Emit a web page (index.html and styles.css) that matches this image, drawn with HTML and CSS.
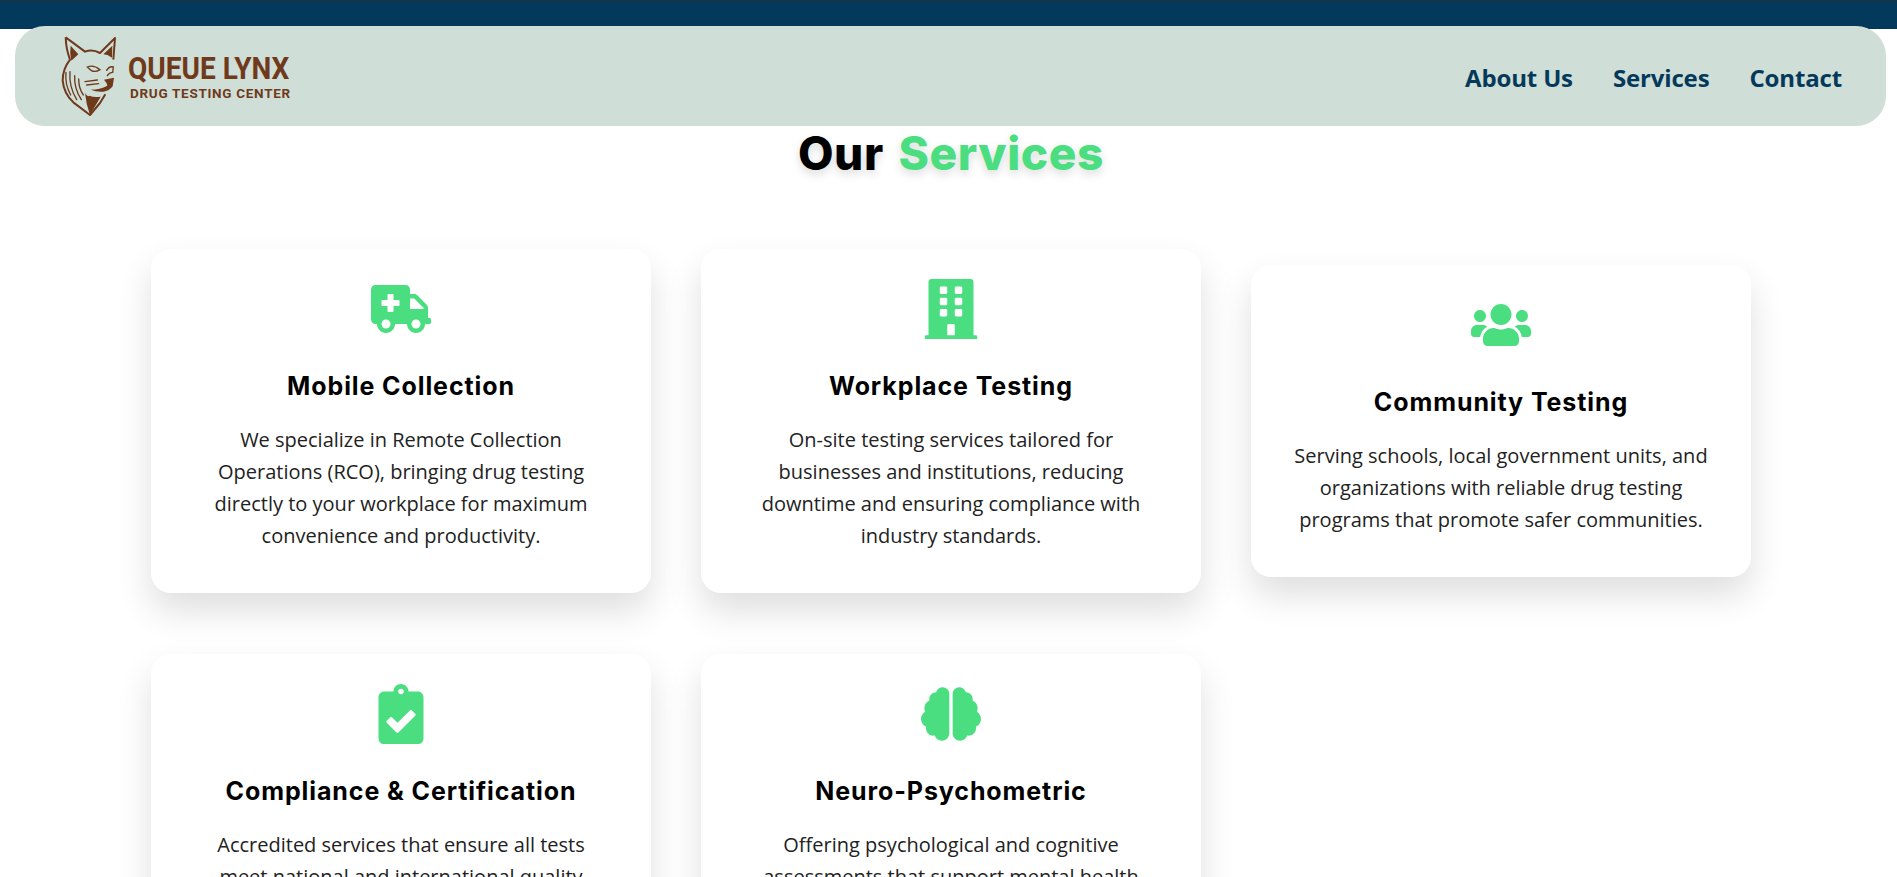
FILE: index.html
```html
<!DOCTYPE html>
<html lang="en">
<head>
<meta charset="utf-8">
<title>Queue Lynx Drug Testing Center</title>
<link rel="stylesheet" href="styles.css">
</head>
<body>
<div class="topbar"></div>
<header class="nav">
  <a class="brand" href="#">
    <svg class="lynx" viewBox="0 0 210 270" aria-hidden="true">
      <path class="lynx-line" d="M47 25 L105 68 Q128 60 150 72 L195 27 L190 92 M47 25 Q48 60 60 92 Q38 120 38 155 Q42 195 70 220 L120 258 L150 222 L166 196"/>
      <path class="lynx-fill" d="M62 50 L85 76 L64 95 Q58 72 62 50Z"/>
      <path class="lynx-fill" d="M160 76 L187 50 L186 86 Q172 76 160 76Z"/>
      <path class="lynx-thin" d="M48 130 Q44 165 62 198 M60 128 Q56 172 80 212 M74 140 Q72 178 94 212 M86 150 Q86 178 100 198"/>
      <path class="lynx-fill" d="M105 192 Q112 205 118 200 Q132 206 152 203 L120 258 Q108 225 105 192Z"/>
      <path class="lynx-thin" d="M112 114 Q130 106 150 122 Q138 130 126 126 Q118 120 112 114Z"/>
      <path class="lynx-thin" d="M170 124 Q178 110 190 114 L188 130 Q178 130 172 140"/>
      <path class="lynx-fill" d="M162 152 L192 146 L188 172 Q178 186 160 188 Q140 190 122 182 Q150 182 172 170 Q170 160 162 152Z"/>
      <path class="lynx-thin" d="M105 158 L142 153 M110 168 L146 164"/>
    </svg>
    <span class="wordmark">
      <span class="wordmark-name">QUEUE LYNX</span>
      <span class="wordmark-sub">DRUG TESTING CENTER</span>
    </span>
  </a>
  <nav class="nav-links">
    <a href="#">About Us</a>
    <a href="#">Services</a>
    <a href="#">Contact</a>
  </nav>
</header>
<main class="services">
  <h2 class="services-title">Our <span class="accent">Services</span></h2>
  <div class="grid">
    <article class="card">
      <svg class="icon" viewBox="0 0 640 512" aria-hidden="true"><path d="M624 352h-16V243.9c0-12.7-5.1-24.9-14.1-33.9L494 110.1c-9-9-21.2-14.1-33.9-14.1H416V48c0-26.5-21.5-48-48-48H48C21.5 0 0 21.5 0 48v320c0 26.5 21.5 48 48 48h16c0 53 43 96 96 96s96-43 96-96h128c0 53 43 96 96 96s96-43 96-96h48c8.8 0 16-7.2 16-16v-32c0-8.8-7.2-16-16-16zM160 464c-26.5 0-48-21.5-48-48s21.5-48 48-48 48 21.5 48 48-21.5 48-48 48zm144-248c0 4.4-3.6 8-8 8h-56v56c0 4.4-3.6 8-8 8h-48c-4.4 0-8-3.6-8-8v-56h-56c-4.4 0-8-3.6-8-8v-48c0-4.4 3.6-8 8-8h56v-56c0-4.4 3.6-8 8-8h48c4.4 0 8 3.6 8 8v56h56c4.4 0 8 3.6 8 8v48zm176 248c-26.5 0-48-21.5-48-48s21.5-48 48-48 48 21.5 48 48-21.5 48-48 48zm80-208H416V144h44.1l99.9 99.9V256z"/></svg>
      <h3>Mobile Collection</h3>
      <p>We specialize in Remote Collection Operations (RCO), bringing drug testing directly to your workplace for maximum convenience and productivity.</p>
    </article>
    <article class="card">
      <svg class="icon" viewBox="0 0 448 512" aria-hidden="true"><path d="M436 480h-20V24c0-13.255-10.745-24-24-24H56C42.745 0 32 10.745 32 24v456H12c-6.627 0-12 5.373-12 12v20h448v-20c0-6.627-5.373-12-12-12zM128 76c0-6.627 5.373-12 12-12h40c6.627 0 12 5.373 12 12v40c0 6.627-5.373 12-12 12h-40c-6.627 0-12-5.373-12-12V76zm0 96c0-6.627 5.373-12 12-12h40c6.627 0 12 5.373 12 12v40c0 6.627-5.373 12-12 12h-40c-6.627 0-12-5.373-12-12v-40zm52 148h-40c-6.627 0-12-5.373-12-12v-40c0-6.627 5.373-12 12-12h40c6.627 0 12 5.373 12 12v40c0 6.627-5.373 12-12 12zm76 160h-64v-84c0-6.627 5.373-12 12-12h40c6.627 0 12 5.373 12 12v84zm64-172c0 6.627-5.373 12-12 12h-40c-6.627 0-12-5.373-12-12v-40c0-6.627 5.373-12 12-12h40c6.627 0 12 5.373 12 12v40zm0-96c0 6.627-5.373 12-12 12h-40c-6.627 0-12-5.373-12-12v-40c0-6.627 5.373-12 12-12h40c6.627 0 12 5.373 12 12v40zm0-96c0 6.627-5.373 12-12 12h-40c-6.627 0-12-5.373-12-12V76c0-6.627 5.373-12 12-12h40c6.627 0 12 5.373 12 12v40z"/></svg>
      <h3>Workplace Testing</h3>
      <p>On-site testing services tailored for businesses and institutions, reducing downtime and ensuring compliance with industry standards.</p>
    </article>
    <article class="card">
      <svg class="icon" viewBox="0 0 640 512" aria-hidden="true"><path d="M96 224c35.3 0 64-28.7 64-64s-28.7-64-64-64-64 28.7-64 64 28.7 64 64 64zm448 0c35.3 0 64-28.7 64-64s-28.7-64-64-64-64 28.7-64 64 28.7 64 64 64zm32 32h-64c-17.6 0-33.5 7.1-45.1 18.6 40.3 22.1 68.9 62 75.1 109.4h66c17.7 0 32-14.3 32-32v-32c0-35.3-28.7-64-64-64zm-256 0c61.9 0 112-50.1 112-112S381.9 32 320 32 208 82.1 208 144s50.1 112 112 112zm76.8 32h-8.3c-20.8 10-43.9 16-68.5 16s-47.6-6-68.5-16h-8.3C179.6 288 128 339.6 128 403.2V432c0 26.5 21.5 48 48 48h288c26.5 0 48-21.5 48-48v-28.8c0-63.6-51.6-115.2-115.2-115.2zm-223.7-13.4C161.5 263.1 145.6 256 128 256H64c-35.3 0-64 28.7-64 64v32c0 17.7 14.3 32 32 32h65.9c6.3-47.4 34.9-87.3 75.2-109.4z"/></svg>
      <h3>Community Testing</h3>
      <p>Serving schools, local government units, and organizations with reliable drug testing programs that promote safer communities.</p>
    </article>
    <article class="card">
      <svg class="icon" viewBox="0 0 384 512" aria-hidden="true"><path d="M336 64h-80c0-35.3-28.7-64-64-64s-64 28.7-64 64H48C21.5 64 0 85.5 0 112v352c0 26.5 21.5 48 48 48h288c26.5 0 48-21.5 48-48V112c0-26.5-21.5-48-48-48zM192 40c13.3 0 24 10.7 24 24s-10.7 24-24 24-24-10.7-24-24 10.7-24 24-24zm121.2 231.8l-143 141.8c-4.7 4.7-12.3 4.6-17-.1l-82.6-83.3c-4.7-4.7-4.6-12.3.1-17L99.1 285c4.7-4.7 12.3-4.6 17 .1l46 46.4 106-105.2c4.7-4.7 12.3-4.6 17 .1l28.2 28.4c4.7 4.8 4.6 12.3-.1 17z"/></svg>
      <h3>Compliance &amp; Certification</h3>
      <p>Accredited services that ensure all tests meet national and international quality</p>
    </article>
    <article class="card">
      <svg class="icon" viewBox="0 0 576 512" aria-hidden="true"><path d="M208 0c-29.9 0-54.7 20.5-61.8 48.2-.8 0-1.4-.2-2.2-.2-35.3 0-64 28.7-64 64 0 4.8.6 9.5 1.7 14C52.5 138 32 166.6 32 200c0 12.6 3.2 24.3 8.3 34.9C16.3 248.7 0 274.3 0 304c0 33.3 20.4 61.9 49.4 73.9-.9 4.6-1.4 9.3-1.4 14.1 0 39.8 32.2 72 72 72 4.1 0 8.1-.5 12-1.2 9.6 28.5 36.2 49.2 68 49.2 39.8 0 72-32.2 72-72V64c0-35.3-28.7-64-64-64zm368 304c0-29.7-16.3-55.3-40.3-69.1 5.2-10.6 8.3-22.3 8.3-34.9 0-33.4-20.5-62-49.7-74 1-4.5 1.7-9.2 1.7-14 0-35.3-28.7-64-64-64-.8 0-1.5.2-2.2.2C422.7 20.5 397.9 0 368 0c-35.3 0-64 28.6-64 64v376c0 39.8 32.2 72 72 72 31.8 0 58.4-20.7 68-49.2 3.9.7 7.9 1.2 12 1.2 39.8 0 72-32.2 72-72 0-4.8-.5-9.5-1.4-14.1 29-12 49.4-40.6 49.4-73.9z"/></svg>
      <h3>Neuro-Psychometric</h3>
      <p>Offering psychological and cognitive assessments that support mental health</p>
    </article>
  </div>
</main>
</body>
</html>
```
FILE: styles.css
```css
* { box-sizing: border-box; }
html { overflow: hidden; height: 100%; }
body {
  margin: 0;
  height: 100%;
  overflow: hidden;
  background: #fff;
  font-family: "Open Sans", sans-serif;
  color: #222;
}
.topbar {
  height: 29px;
  background: #03395a;
  border-top: 1px solid #22303a;
}
.nav {
  position: relative;
  z-index: 2;
  height: 100px;
  margin: -3px 11px 0 15px;
  padding: 0 44px 0 47px;
  display: flex;
  align-items: center;
  justify-content: space-between;
  background: #cfded7;
  border-radius: 30px;
}
.brand {
  display: flex;
  align-items: center;
  gap: 10px;
  text-decoration: none;
  color: #6f3a1c;
}
.lynx { width: 70px; height: 90px; margin-left: -12px; margin-top: -4px; flex: none; }
.lynx-line { fill: none; stroke: #6f3a1c; stroke-width: 6; stroke-linejoin: round; }
.lynx-fill { fill: #6f3a1c; }
.lynx-thin { fill: none; stroke: #6f3a1c; stroke-width: 4; stroke-linecap: round; }
.wordmark { display: flex; flex-direction: column; margin-left: -2px; }
.wordmark-name {
  font-family: Roboto, sans-serif;
  font-weight: 700;
  font-size: 32px;
  line-height: 34px;
  transform: scaleX(.875);
  transform-origin: left center;
}
.wordmark-sub {
  font-family: Roboto, sans-serif;
  font-weight: 700;
  font-size: 13.5px;
  line-height: 16px;
  letter-spacing: .7px;
  padding-left: 2px;
}
.nav-links { display: flex; gap: 40px; padding-top: 3px; }
.nav-links a {
  font-family: "Open Sans", sans-serif;
  font-weight: 700;
  font-size: 24px;
  line-height: 34px;
  letter-spacing: -.15px;
  color: #04395a;
  text-decoration: none;
}
.services-title {
  margin: 0;
  padding: 0 0 0 5px;
  text-align: center;
  font-family: Inter, sans-serif;
  font-weight: 800;
  font-size: 46px;
  line-height: 54px;
  letter-spacing: .6px;
  word-spacing: 4px;
  color: #000;
  text-shadow: 0 4px 10px rgba(0,0,0,.15);
}
.accent { color: #4ade80; }
.grid {
  margin: 69px 146px 0 151px;
  display: grid;
  grid-template-columns: repeat(3, 500px);
  column-gap: 50px;
  row-gap: 61px;
  align-items: center;
}
.card {
  background: #fff;
  border-radius: 20px;
  padding: 30px 41px 41px;
  text-align: center;
  box-shadow: 0 18px 35px rgba(0,0,0,.13);
}
.icon { display: block; width: 60px; height: 60px; margin: 0 auto; fill: #4ade80; }
.card h3 {
  margin: 32px 0 23px;
  font-family: Inter, sans-serif;
  font-weight: 700;
  font-size: 25px;
  line-height: 30px;
  letter-spacing: .9px;
  color: #000;
}
.card p {
  margin: 0;
  font-size: 20px;
  line-height: 32px;
  color: #222;
}
```
